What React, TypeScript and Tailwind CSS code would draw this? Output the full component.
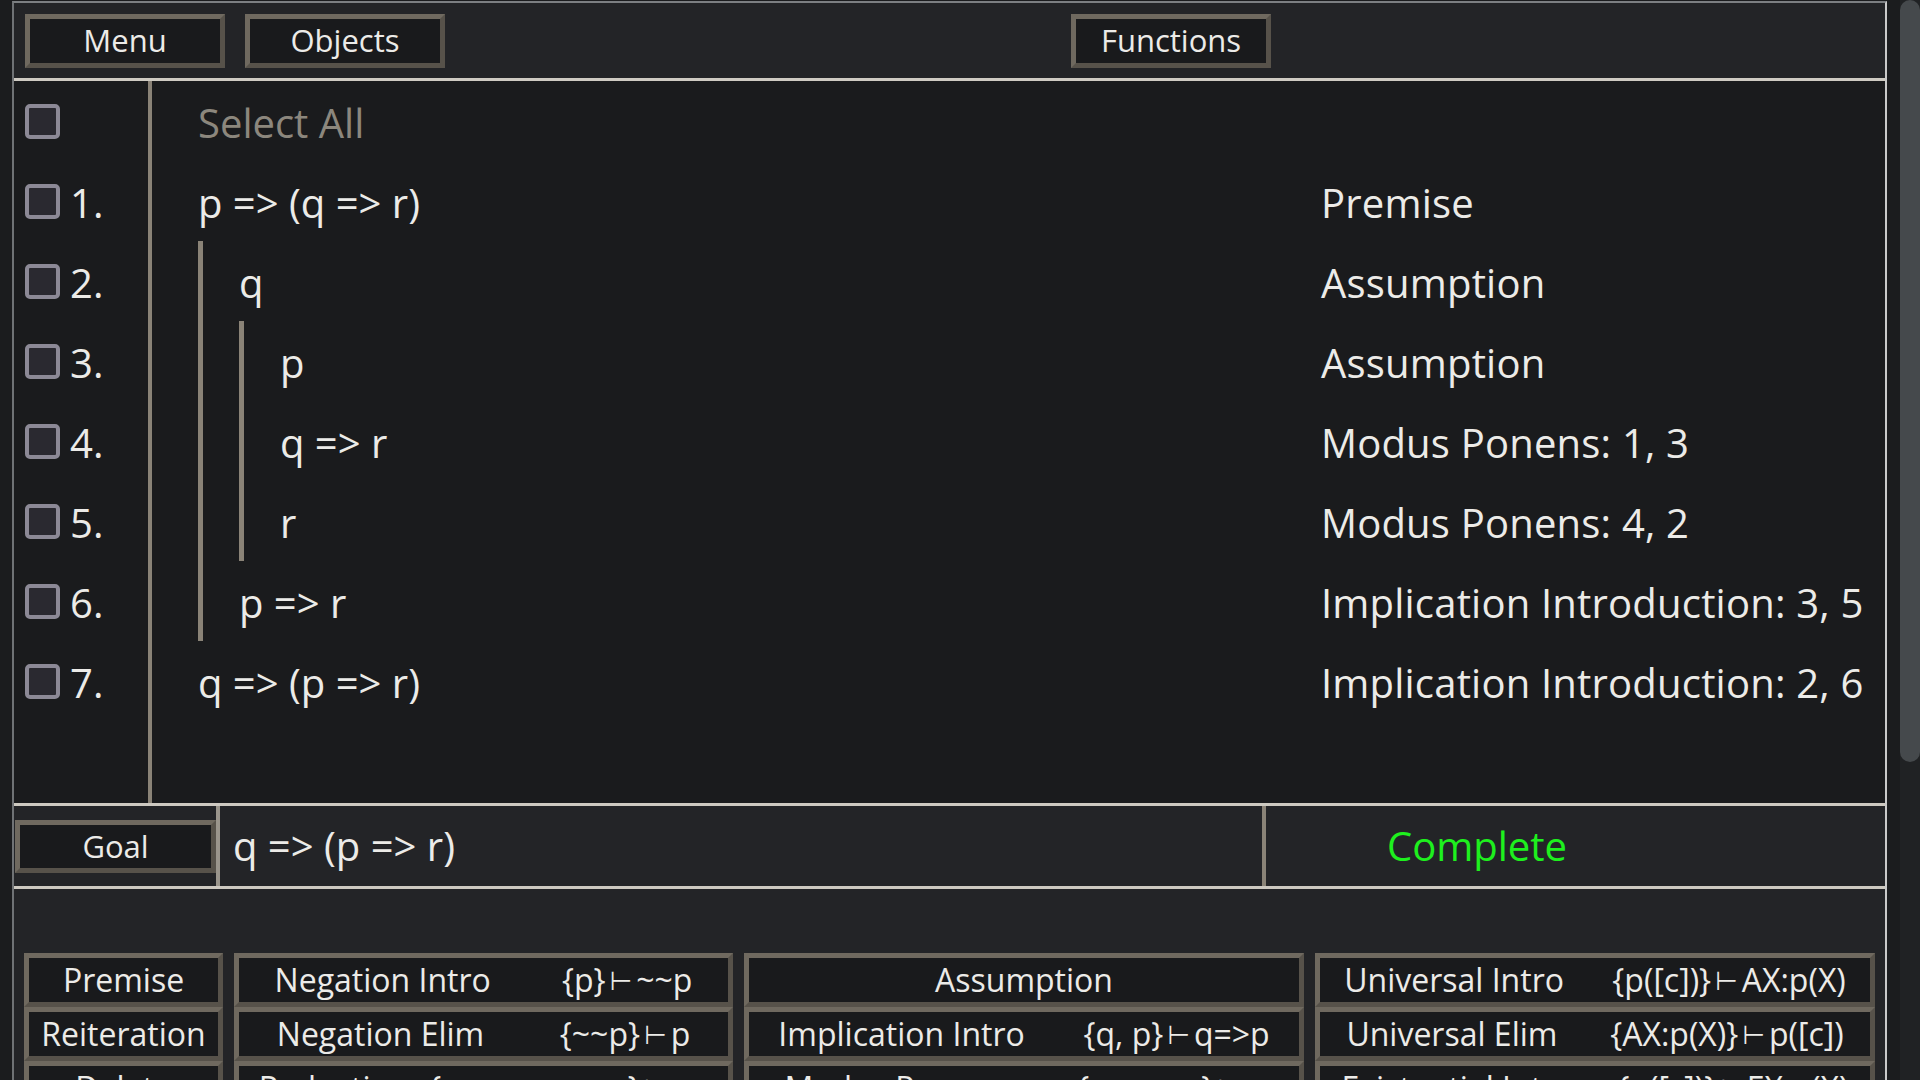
import React from "react";

const bevel =
  "border-[5px] border-t-[#6f695f] border-l-[#6f695f] border-b-[#57524a] border-r-[#57524a] bg-[#191a1c]";

const proofLines = [
  { n: 1, text: "p => (q => r)", depth: 0, rule: "Premise" },
  { n: 2, text: "q", depth: 1, rule: "Assumption" },
  { n: 3, text: "p", depth: 2, rule: "Assumption" },
  { n: 4, text: "q => r", depth: 2, rule: "Modus Ponens: 1, 3" },
  { n: 5, text: "r", depth: 2, rule: "Modus Ponens: 4, 2" },
  { n: 6, text: "p => r", depth: 1, rule: "Implication Introduction: 3, 5" },
  { n: 7, text: "q => (p => r)", depth: 0, rule: "Implication Introduction: 2, 6" },
];

type Rule = { name: string; form?: string };

const ruleRows: Rule[][] = [
  [
    { name: "Premise" },
    { name: "Negation Intro", form: "{p} ⊢ ~~p" },
    { name: "Assumption" },
    { name: "Universal Intro", form: "{p([c])} ⊢ AX:p(X)" },
  ],
  [
    { name: "Reiteration" },
    { name: "Negation Elim", form: "{~~p} ⊢ p" },
    { name: "Implication Intro", form: "{q, p} ⊢ q=>p" },
    { name: "Universal Elim", form: "{AX:p(X)} ⊢ p([c])" },
  ],
  [
    { name: "Delete" },
    { name: "Reductio", form: "{p=>q, p=>~q} ⊢ ~p" },
    { name: "Modus Ponens", form: "{p=>q, p} ⊢ q" },
    { name: "Existential Intro", form: "{p([c])} ⊢ EX:p(X)" },
  ],
  [
    { name: "Clear" },
    { name: "And Intro", form: "{p, q} ⊢ p&q" },
    { name: "Or Intro", form: "{p} ⊢ p|q" },
    { name: "Existential Elim", form: "{EX:p(X)} ⊢ p([c])" },
  ],
];

const colWidths = ["w-[199px]", "w-[499px]", "w-[560px]", "w-[560px]"];

function Checkbox() {
  return (
    <span className="w-[35px] h-[35px] rounded-[5px] border-4 border-[#8c8996] bg-[#2a2930] shrink-0" />
  );
}

function TopButton({ label, className = "" }: { label: string; className?: string }) {
  return (
    <button
      className={`${bevel} w-[200px] h-[54px] flex items-center justify-center text-[31px] leading-none text-[#ecebe8] ${className}`}
    >
      {label}
    </button>
  );
}

// splits the turnstile so it can be drawn a little narrower
function Formula({ form }: { form: string }) {
  const [lhs, rhs] = form.split(" ⊢ ");
  return (
    <span className="flex items-center">
      {lhs}
      <span className="text-[26px] mx-[4px]">⊢</span>
      {rhs}
    </span>
  );
}

export default function App() {
  return (
    <div className="h-screen w-full overflow-hidden flex bg-[#1b1c1e] font-['Open_Sans','DejaVu_Sans',sans-serif] text-[#ecebe8]">
      <div className="flex-1 min-w-0">
        <div className="ml-[12px] mr-[13px] mt-[1px] border-l-2 border-t-2 border-r-2 border-l-[#6f7275] border-t-[#7c7f82] border-r-[#c9c9c9]">
          {/* header */}
          <div className="h-[78px] bg-[#232427] flex items-center pl-[11px] border-b-[3px] border-[#cfcbc3]">
            <TopButton label="Menu" />
            <TopButton label="Objects" className="ml-[20px]" />
            <TopButton label="Functions" className="ml-[626px]" />
          </div>

          {/* proof */}
          <div className="h-[725px] bg-[#1a1b1d] flex border-b-[3px] border-[#cdc9c1]">
            <div className="w-[138px] border-r-4 border-[#8a8377] flex flex-col">
              <div className="h-[80px] flex items-center pl-[11px]">
                <Checkbox />
              </div>
              {proofLines.map((line) => (
                <div key={line.n} className="h-[80px] flex items-center pl-[11px] gap-[10px]">
                  <Checkbox />
                  <span className="text-[40px] leading-none mt-[4px]">{line.n}.</span>
                </div>
              ))}
            </div>
            <div className="flex-1 flex flex-col">
              <div className="h-[80px] flex items-center pl-[46px]">
                <span className="text-[40px] leading-none mt-[4px] text-[#8c877d]">Select All</span>
              </div>
              {proofLines.map((line) => (
                <div key={line.n} className="h-[80px] flex">
                  <div className="flex-1 flex items-stretch pl-[46px]">
                    {Array.from({ length: line.depth }).map((_, i) => (
                      <span key={i} className="w-[5px] mr-[36px] bg-[#8a8377] shrink-0" />
                    ))}
                    <span className="self-center text-[40px] leading-none mt-[4px]">{line.text}</span>
                  </div>
                  <div className="w-[564px] flex items-center">
                    <span className="text-[40px] leading-none mt-[4px] tracking-[0.2px]">{line.rule}</span>
                  </div>
                </div>
              ))}
            </div>
          </div>

          {/* goal */}
          <div className="h-[83px] bg-[#232427] flex border-b-[3px] border-[#cdc9c1]">
            <div className="w-[206px] border-r-4 border-[#9a958c] flex items-center pl-[1px]">
              <button className={`${bevel} w-full h-[53px] flex items-center justify-center text-[31px] leading-none`}>
                Goal
              </button>
            </div>
            <div className="w-[1046px] border-r-4 border-[#8a8377] flex items-center pl-[13px]">
              <span className="text-[40px] leading-none">q =&gt; (p =&gt; r)</span>
            </div>
            <div className="flex-1 flex items-center pl-[121px]">
              <span className="text-[40px] leading-none text-[#1ef01e]">Complete</span>
            </div>
          </div>

          {/* rules */}
          <div className="h-[640px] bg-[#232427] pt-[64px] pl-[10px] flex flex-col">
            {ruleRows.map((row, r) => (
              <div key={r} className="flex gap-[11px]">
                {row.map((rule, c) => (
                  <button
                    key={c}
                    className={`${bevel} ${colWidths[c]} h-[54px] flex items-center justify-around text-[32px] leading-none whitespace-nowrap`}
                  >
                    <span>{rule.name}</span>
                    {rule.form && <Formula form={rule.form} />}
                  </button>
                ))}
              </div>
            ))}
          </div>
        </div>
      </div>

      {/* scrollbar */}
      <div className="w-[20px] shrink-0 bg-[#202224] flex flex-col">
        <div className="h-[762px] rounded-[10px] bg-[#45494c]" />
      </div>
    </div>
  );
}
